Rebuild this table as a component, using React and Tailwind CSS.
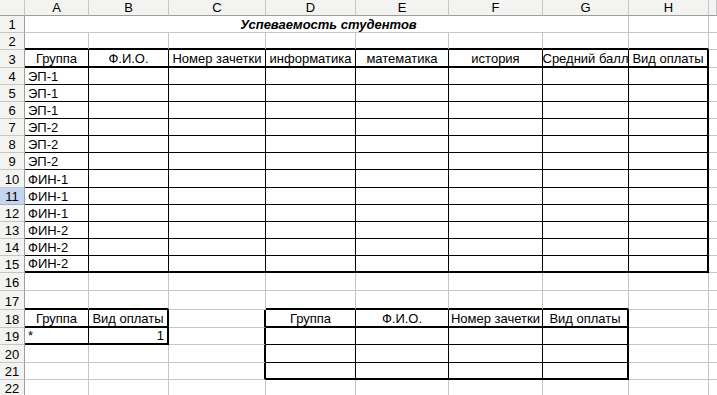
import React from 'react';

const COLS = ['A', 'B', 'C', 'D', 'E', 'F', 'G', 'H', ''];

// heights for rows 1..22
const ROW_H = {
    1: 'h-[17px]', 2: 'h-[17px]', 3: 'h-[18px]', 4: 'h-[17px]', 5: 'h-[17px]', 6: 'h-[17px]',
    7: 'h-[17px]', 8: 'h-[17px]', 9: 'h-[17px]', 10: 'h-[18px]', 11: 'h-[17px]', 12: 'h-[17px]',
    13: 'h-[17px]', 14: 'h-[17px]', 15: 'h-[17px]', 16: 'h-[18px]', 17: 'h-[19px]', 18: 'h-[18px]',
    19: 'h-[17px]', 20: 'h-[18px]', 21: 'h-[17px]', 22: 'h-[17px]',
};

const tables = [
    { r1: 3, r2: 15, c1: 1, c2: 8, head: 3 },
    { r1: 18, r2: 19, c1: 1, c2: 2, head: 18 },
    { r1: 18, r2: 21, c1: 4, c2: 7, head: 18 },
];

const groups = ['ЭП-1', 'ЭП-1', 'ЭП-1', 'ЭП-2', 'ЭП-2', 'ЭП-2', 'ФИН-1', 'ФИН-1', 'ФИН-1', 'ФИН-2', 'ФИН-2', 'ФИН-2'];

// cell contents: [row][col]
const cells = {
    3: {
        1: 'Группа', 2: 'Ф.И.О.', 3: 'Номер зачетки', 4: 'информатика',
        5: 'математика', 6: 'история', 7: 'Средний балл', 8: 'Вид оплаты',
    },
    18: { 1: 'Группа', 2: 'Вид оплаты', 4: 'Группа', 5: 'Ф.И.О.', 6: 'Номер зачетки', 7: 'Вид оплаты' },
};

const R = {
    thick: 'border-r-2 border-r-black',
    thin: 'border-r border-r-black',
    grid: 'border-r border-r-[#c6c6c6]',
    none: '',
};
const B = {
    thick: 'border-b-2 border-b-black',
    thin: 'border-b border-b-black',
    grid: 'border-b border-b-[#c6c6c6]',
};

const tableAt = (r, c) => tables.find(t => r >= t.r1 && r <= t.r2 && c >= t.c1 && c <= t.c2);

function rightBorder(r, c) {
    const t = tableAt(r, c);
    const n = tableAt(r, c + 1);
    if (t && c === t.c2) return 'thick';
    if (n && n !== t && c + 1 === n.c1) return 'thick';
    if (t) return 'thin';
    return 'grid';
}

function bottomBorder(r, c) {
    const t = tableAt(r, c);
    const n = tableAt(r + 1, c);
    if (t && (r === t.r2 || r === t.head)) return 'thick';
    if (n && n !== t && r + 1 === n.r1) return 'thick';
    if (t) return 'thin';
    return 'grid';
}

function cellContent(r, c) {
    if (cells[r] && cells[r][c]) return { text: cells[r][c], align: 'justify-center' };
    if (r >= 4 && r <= 15 && c === 1) return { text: groups[r - 4], align: 'justify-start pl-[3px]' };
    if (r === 19 && c === 1) return { text: '*', align: 'justify-start pl-[3px]' };
    if (r === 19 && c === 2) return { text: '1', align: 'justify-end pr-[3px]' };
    return null;
}

const gridCols = 'grid grid-cols-[25px_64px_80px_97px_90px_93px_94px_86px_80px_1fr]';

function Row({ r }) {
    const sel = r === 11;
    return (
        <div className={`${gridCols} ${ROW_H[r]}`}>
            <div className={`flex items-end justify-center pb-[1px] leading-[12px] border-r border-r-[#9d9d9d] border-b ${sel ? 'bg-[#c5d5ee] border-b-[#9fb4d6]' : 'bg-[#f3f3f1] border-b-[#c6c6c6]'}`}>
                {r}
            </div>
            {r === 1 ? (
                <>
                    {/* merged A1:G1 */}
                    <div className={`col-span-7 flex items-end justify-center pl-[4px] pb-[1px] leading-[12px] font-bold italic ${B.grid} ${R.grid}`}>
                        Успеваемость студентов
                    </div>
                    <div className={`${R.grid} ${B.grid}`} />
                    <div className={B.grid} />
                </>
            ) : (
                COLS.map((_, i) => {
                    const c = i + 1;
                    const content = cellContent(r, c);
                    return (
                        <div
                            key={c}
                            className={`flex items-end whitespace-nowrap overflow-hidden pb-[1px] leading-[12px] ${c === 9 ? '' : R[rightBorder(r, c)]} ${B[bottomBorder(r, c)]} ${content ? content.align : ''}`}
                        >
                            {content ? content.text : null}
                        </div>
                    );
                })
            )}
        </div>
    );
}

export default function App() {
    const rows = Array.from({ length: 22 }, (_, i) => i + 1);
    return (
        <div className="w-[717px] h-[395px] overflow-hidden bg-white text-black text-[13px] font-['Liberation_Sans',Arial,sans-serif]">
            {/* column headers */}
            <div className={`${gridCols} h-[16px] bg-[#f3f3f1]`}>
                <div className="border-r border-r-[#c6c6c6] border-b border-b-[#9d9d9d]" />
                {COLS.map((l, i) => (
                    <div key={i} className="flex items-end justify-center pb-[1px] leading-[12px] border-r border-r-[#c6c6c6] border-b border-b-[#9d9d9d]">
                        {l}
                    </div>
                ))}
            </div>
            {rows.map(r => <Row key={r} r={r} />)}
        </div>
    );
}
